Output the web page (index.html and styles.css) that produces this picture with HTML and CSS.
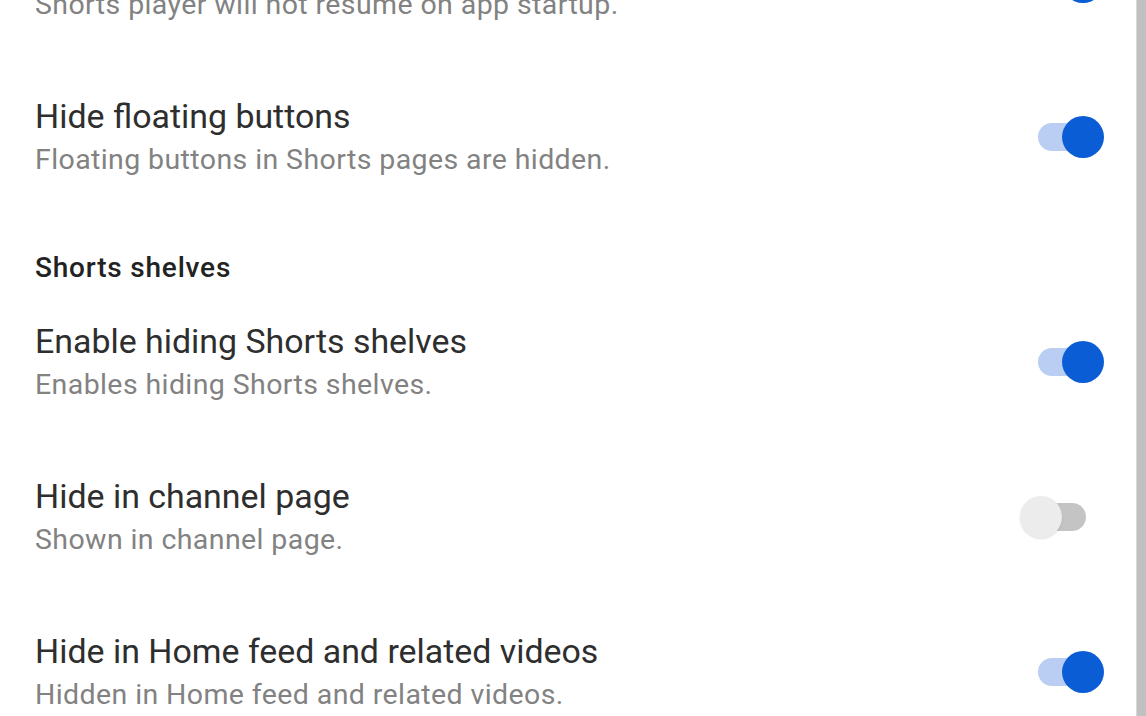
FILE: index.html
```html
<!DOCTYPE html>
<html lang="en">
<head>
<meta charset="utf-8">
<title>Shorts settings</title>
<link rel="stylesheet" href="styles.css">
</head>
<body>
<div class="screen">
  <main class="prefs">
    <div class="row">
      <div class="text">
        <div class="title">Hide Shorts player on startup</div>
        <div class="summary">Shorts player will not resume on app startup.</div>
      </div>
      <div class="switch on"><span class="thumb"></span></div>
    </div>
    <div class="row">
      <div class="text">
        <div class="title">Hide floating buttons</div>
        <div class="summary">Floating buttons in Shorts pages are hidden.</div>
      </div>
      <div class="switch on"><span class="thumb"></span></div>
    </div>
    <div class="category">Shorts shelves</div>
    <div class="row">
      <div class="text">
        <div class="title">Enable hiding Shorts shelves</div>
        <div class="summary">Enables hiding Shorts shelves.</div>
      </div>
      <div class="switch on"><span class="thumb"></span></div>
    </div>
    <div class="row">
      <div class="text">
        <div class="title">Hide in channel page</div>
        <div class="summary">Shown in channel page.</div>
      </div>
      <div class="switch off"><span class="thumb"></span></div>
    </div>
    <div class="row">
      <div class="text">
        <div class="title">Hide in Home feed and related videos</div>
        <div class="summary">Hidden in Home feed and related videos.</div>
      </div>
      <div class="switch on"><span class="thumb"></span></div>
    </div>
  </main>
  <div class="edge"></div>
</div>
</body>
</html>
```
FILE: styles.css
```css
html, body {
  margin: 0;
  padding: 0;
  background: #ffffff;
  overflow: hidden;
}
.screen {
  display: flex;
  width: 1146px;
  height: 716px;
  overflow: hidden;
  font-family: Roboto, "Liberation Sans", sans-serif;
}
.prefs {
  flex: 1;
  margin-top: -96px;
  padding-left: 35px;
}
.edge {
  width: 9px;
  flex: none;
  background: #c0c0c0;
  border-left: 1px solid #d8d8d8;
}
.row {
  display: flex;
  align-items: center;
  justify-content: space-between;
  padding: 35.5px 0;
}
.text {
  display: flex;
  flex-direction: column;
}
.title {
  font-size: 33.9px;
  line-height: 44px;
  color: #2e2e2e;
}
.summary {
  margin-top: 2px;
  font-size: 28.5px;
  line-height: 38px;
  letter-spacing: 0.4px;
  color: #828282;
}
.category {
  padding-top: 37.5px;
  padding-bottom: 1px;
  font-size: 28px;
  line-height: 32px;
  letter-spacing: 0.8px;
  font-weight: 500;
  color: #222222;
}
.switch {
  position: relative;
  width: 48px;
  height: 28px;
  border-radius: 14px;
  margin-right: 50px;
  flex: none;
}
.switch.on {
  background: #b9cef2;
}
.switch.off {
  background: #c4c4c4;
}
.thumb {
  position: absolute;
  top: -7px;
  width: 42px;
  height: 42px;
  border-radius: 50%;
}
.switch.on .thumb {
  left: 24px;
  background: #0b5dd6;
}
.switch.off .thumb {
  left: -18px;
  background: #ececec;
  box-shadow: 0 1px 2px rgba(0,0,0,0.12);
}
```
